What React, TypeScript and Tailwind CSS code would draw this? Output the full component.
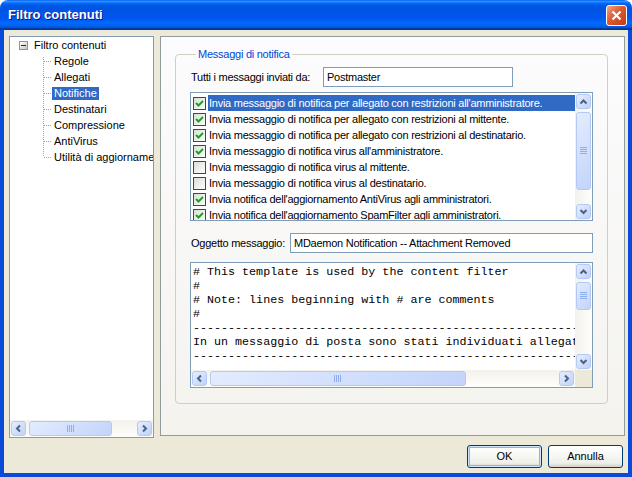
import React from "react";

const UP = "M1.5 6.5 L4.5 3.5 L7.5 6.5";
const DOWN = "M1.5 3 L4.5 6 L7.5 3";
const LEFT = "M6 1.5 L3 4.5 L6 7.5";
const RIGHT = "M3 1.5 L6 4.5 L3 7.5";

function ScrollBtn({ d }: { d: string }) {
  return (
    <div className="w-[17px] h-[17px] shrink-0 p-px">
      <div className="w-full h-full flex items-center justify-center rounded-[3px] border border-[#B4C9F5] bg-[linear-gradient(135deg,#E6EEFF,#C0D2FA)]">
        <svg width="9" height="9" viewBox="0 0 9 9">
          <path d={d} fill="none" stroke="#4D6185" strokeWidth="2" />
        </svg>
      </div>
    </div>
  );
}

function Grip({ vertical }: { vertical?: boolean }) {
  return vertical ? (
    <svg width="7" height="8" viewBox="0 0 7 8">
      {[0, 2, 4, 6].map((y) => (
        <line key={y} x1="0" x2="7" y1={y + 0.5} y2={y + 0.5} stroke="#8EADF0" />
      ))}
    </svg>
  ) : (
    <svg width="8" height="7" viewBox="0 0 8 7">
      {[0, 2, 4, 6].map((x) => (
        <line key={x} y1="0" y2="7" x1={x + 0.5} x2={x + 0.5} stroke="#8EADF0" />
      ))}
    </svg>
  );
}

function Thumb({ className, vertical }: { className: string; vertical?: boolean }) {
  return (
    <div
      className={`${className} flex items-center justify-center rounded-[3px] border border-[#B4C9F5] bg-[linear-gradient(135deg,#E3ECFF,#C3D4FB)]`}
    >
      <Grip vertical={vertical} />
    </div>
  );
}

function VScroll({ thumb }: { thumb: string }) {
  return (
    <div className="w-[17px] shrink-0 flex flex-col bg-[linear-gradient(to_right,#F3F1EC,#FEFEFB)]">
      <ScrollBtn d={UP} />
      <div className="flex-1 px-px">
        <Thumb className={thumb} vertical />
      </div>
      <ScrollBtn d={DOWN} />
    </div>
  );
}

function HScroll({ thumb }: { thumb: string }) {
  return (
    <div className="h-[17px] flex-1 min-w-0 flex bg-[linear-gradient(to_bottom,#F3F1EC,#FEFEFB)]">
      <ScrollBtn d={LEFT} />
      <div className="flex-1 py-px">
        <Thumb className={thumb} />
      </div>
      <ScrollBtn d={RIGHT} />
    </div>
  );
}

function CheckBox({ checked }: { checked: boolean }) {
  return (
    <div className="w-[13px] h-[13px] shrink-0 border border-[#1C5180] bg-[linear-gradient(135deg,#DCDCD7,#FFFFFF)] flex items-center justify-center">
      {checked && (
        <svg width="11" height="11" viewBox="0 0 11 11">
          <path d="M2 5 L4.5 7.5 L9 3" fill="none" stroke="#21A121" strokeWidth="2" />
        </svg>
      )}
    </div>
  );
}

const items = [
  { text: "Invia messaggio di notifica per allegato con restrizioni all'amministratore.", checked: true },
  { text: "Invia messaggio di notifica per allegato con restrizioni al mittente.", checked: true },
  { text: "Invia messaggio di notifica per allegato con restrizioni al destinatario.", checked: true },
  { text: "Invia messaggio di notifica virus all'amministratore.", checked: true },
  { text: "Invia messaggio di notifica virus al mittente.", checked: false },
  { text: "Invia messaggio di notifica virus al destinatario.", checked: false },
  { text: "Invia notifica dell'aggiornamento AntiVirus agli amministratori.", checked: true },
  { text: "Invia notifica dell'aggiornamento SpamFilter agli amministratori.", checked: true },
];

const template = [
  "# This template is used by the content filter",
  "#",
  "# Note: lines beginning with # are comments",
  "#",
  "--------------------------------------------------------------------------",
  "In un messaggio di posta sono stati individuati allegati con restrizioni.",
  "--------------------------------------------------------------------------",
];

const treeChildren = ["Regole", "Allegati", "Notifiche", "Destinatari", "Compressione", "AntiVirus", "Utilità di aggiornamento"];

function Tree() {
  return (
    <div className="w-[145px] h-[402px] shrink-0 border border-[#7F9DB9] bg-white flex flex-col">
      <div className="flex-1 overflow-hidden">
        <div className="h-[16px] flex items-center">
          <div className="ml-[9px] w-[9px] h-[9px] border border-[#7A98AF] bg-[linear-gradient(135deg,#FFFFFF,#C8C4BA)] flex items-center justify-center">
            <div className="w-[5px] h-px bg-[#1F2F4F]" />
          </div>
          <span className="ml-[6px] whitespace-nowrap">Filtro contenuti</span>
        </div>
        {treeChildren.map((c, i) => (
          <div key={c} className="h-[16px] flex items-center pl-[33px]">
            <svg width="9" height="16" viewBox="0 0 9 16" className="shrink-0">
              <line
                x1="0.5"
                x2="0.5"
                y1={i === 0 ? 4 : 0}
                y2={i === treeChildren.length - 1 ? 8 : 16}
                stroke="#A9A594"
                strokeDasharray="1 1"
              />
              <line x1="1" x2="9" y1="8.5" y2="8.5" stroke="#A9A594" strokeDasharray="1 1" />
            </svg>
            <span
              className={`h-[13px] leading-[13px] px-[2px] whitespace-nowrap ${
                c === "Notifiche" ? "bg-[#316AC5] text-white" : ""
              }`}
            >
              {c}
            </span>
          </div>
        ))}
      </div>
      <div className="flex">
        <HScroll thumb="ml-[2px] w-[83px] h-full" />
      </div>
    </div>
  );
}

function CheckList() {
  return (
    <div className="mt-[5px] h-[129px] border border-[#7F9DB9] bg-white flex">
      <div className="flex-1 min-w-0 pt-[2px] overflow-hidden">
        {items.map((it, i) => (
          <div key={i} className="h-[16px] flex items-center pl-[2px]">
            <CheckBox checked={it.checked} />
            <span
              className={`ml-[2px] flex-1 min-w-0 overflow-hidden h-[16px] leading-[16px] pl-px whitespace-nowrap ${
                i === 0 ? "bg-[#316AC5] text-white" : ""
              }`}
            >
              {it.text}
            </span>
          </div>
        ))}
      </div>
      <VScroll thumb="mt-[2px] h-[78px]" />
    </div>
  );
}

function TemplateBox() {
  return (
    <div className="mt-[9px] h-[126px] border border-[#7F9DB9] bg-white flex flex-col">
      <div className="flex-1 flex min-h-0">
        <pre className="flex-1 min-w-0 overflow-hidden pt-[2px] pl-[2px] font-['Liberation_Mono','Courier_New',monospace] text-[11.7px] leading-[14px] tracking-normal whitespace-pre">
          {template.join("\n")}
        </pre>
        <VScroll thumb="mt-[2px] h-[28px]" />
      </div>
      <div className="flex">
        <HScroll thumb="ml-[2px] w-[256px] h-full" />
        <div className="w-[17px] h-[17px] bg-[#ECE9D8]" />
      </div>
    </div>
  );
}

function XpButton({ label, primary }: { label: string; primary?: boolean }) {
  return (
    <button
      className={`w-[75px] h-[23px] rounded-[3px] border border-[#003C74] bg-[linear-gradient(to_bottom,#FFFFFF,#F0F0EA_80%,#D6D0C5)] ${
        primary ? "shadow-[inset_0_0_0_1px_#CEE7FF,inset_0_0_0_2px_#8FB2EA]" : ""
      }`}
    >
      {label}
    </button>
  );
}

export default function App() {
  return (
    <div className="w-[632px] h-[477px] flex flex-col font-['Liberation_Sans',Arial,sans-serif] text-[11px] text-black">
      <div className="h-[30px] shrink-0 rounded-t-[8px] flex items-center justify-between pl-[8px] pr-[5px] bg-[linear-gradient(to_bottom,#0058EE_0%,#3593FF_4%,#288EFF_6%,#127DFF_8%,#036FFC_10%,#0262EE_14%,#0057E5_20%,#0054E3_24%,#0055EB_56%,#005BF5_66%,#026AFE_76%,#0062EF_86%,#0052D6_92%,#0040AB_94%,#003092_100%)]">
        <span className="text-white font-bold text-[13px] [text-shadow:1px_1px_0_#0A1883]">Filtro contenuti</span>
        <div className="w-[21px] h-[21px] rounded-[3px] border border-white bg-[linear-gradient(135deg,#F0A58A,#E05A2E_45%,#C13A12)] flex items-center justify-center">
          <svg width="11" height="11" viewBox="0 0 11 11">
            <path d="M1.5 1.5 L9.5 9.5 M9.5 1.5 L1.5 9.5" stroke="white" strokeWidth="2.2" />
          </svg>
        </div>
      </div>

      <div className="flex-1 flex flex-col bg-[#ECE9D8] border-x-4 border-b-4 border-[#0A4AD9] pt-[6px] px-[5px]">
        <div className="h-[402px] flex gap-[6px]">
          <Tree />
          <div className="w-[465px] h-[400px] shrink-0 border border-[#919B9C] bg-[linear-gradient(to_bottom,#FCFCFE,#F4F3EE)] pt-[11px] pl-[14px] tracking-[-0.25px]">
            <fieldset className="w-[433px] min-w-0 h-[356px] border border-[#D0D0BF] rounded-[4px] px-[14px] pb-[15px]">
              <legend className="ml-[6px] px-[2px] text-[#0046D5] leading-[13px]">Messaggi di notifica</legend>
              <div className="mt-[6px] h-[20px] flex items-center">
                <span className="w-[133px] shrink-0 pl-px">Tutti i messaggi inviati da:</span>
                <div className="w-[190px] h-[20px] border border-[#7F9DB9] bg-white pl-[3px] flex items-center">Postmaster</div>
              </div>
              <CheckList />
              <div className="mt-[12px] h-[20px] flex items-center">
                <span className="w-[100px] shrink-0 pl-px">Oggetto messaggio:</span>
                <div className="flex-1 min-w-0 h-[20px] border border-[#7F9DB9] bg-white pl-[3px] flex items-center whitespace-nowrap overflow-hidden">
                  MDaemon Notification -- Attachment Removed
                </div>
              </div>
              <TemplateBox />
            </fieldset>
          </div>
        </div>
        <div className="mt-[7px] flex justify-end gap-[6px]">
          <XpButton label="OK" primary />
          <XpButton label="Annulla" />
        </div>
      </div>
    </div>
  );
}
